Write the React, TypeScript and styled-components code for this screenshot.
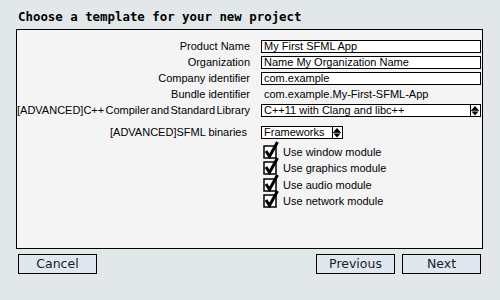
import React from "react";
import styled, { createGlobalStyle } from "styled-components";

const Global = createGlobalStyle`
  html, body { margin: 0; padding: 0; background: #e2e8ea; }
  #root { width: 500px; height: 300px; }
`;

const Page = styled.div`
  width: 500px;
  height: 300px;
  box-sizing: border-box;
  padding: 9px 17px 0 16px;
  display: flex;
  flex-direction: column;
  background: #e2e8ea;
`;

const Title = styled.h1`
  margin: 0 0 0 2px;
  height: 20px;
  font-family: "DejaVu Sans Mono", monospace;
  font-weight: bold;
  font-size: 12.4px;
  line-height: 16px;
  color: #000;
`;

const Panel = styled.div`
  height: 220px;
  box-sizing: border-box;
  border: 1px solid #000;
  background: #f4f4f4;
  padding: 10px 0 0 0;
  font-family: "Liberation Sans", Arial, sans-serif;
  font-size: 11px;
  color: #000;
`;

const Form = styled.div`
  display: grid;
  grid-template-columns: 233px 220px;
  column-gap: 11px;
  row-gap: 3px;
  align-items: center;
`;

const Label = styled.div<{ $squeeze?: boolean }>`
  text-align: right;
  white-space: nowrap;
  line-height: 13px;
  word-spacing: ${(p) => (p.$squeeze ? "-1.75px" : "0")};
`;

const Field = styled.div`
  height: 13px;
  box-sizing: border-box;
  border: 1px solid #000;
  background: #fff;
  padding: 0 2px;
  line-height: 11px;
  font-size: 11px;
  white-space: nowrap;
  overflow: hidden;
`;

const Plain = styled.div`
  height: 13px;
  line-height: 13px;
  padding-left: 3px;
  white-space: nowrap;
`;

const Select = styled.div<{ $width?: number }>`
  height: 13px;
  width: ${(p) => (p.$width ? `${p.$width}px` : "auto")};
  box-sizing: border-box;
  border: 1px solid #000;
  background: #fff;
  display: flex;
  align-items: stretch;
  line-height: 11px;
  font-size: 11px;
`;

const SelectText = styled.span`
  flex: 1;
  padding-left: 2px;
  white-space: nowrap;
  overflow: hidden;
`;

const Stepper = styled.span`
  width: 9px;
  border-left: 1px solid #000;
  display: flex;
`;

const Spacer = styled.div<{ $h: number }>`
  grid-column: 1 / span 2;
  height: ${(p) => p.$h}px;
`;

const Checks = styled.div`
  grid-column: 2;
  display: flex;
  flex-direction: column;
  margin-top: 0px;
`;

const CheckRow = styled.div`
  height: 16.6px;
  display: flex;
  align-items: flex-end;
  padding-left: 2px;
`;

const CheckText = styled.span`
  margin-left: 4px;
  line-height: 13px;
  padding-bottom: 0px;
  white-space: nowrap;
`;

const Footer = styled.div`
  display: flex;
  align-items: center;
  margin-top: 5px;
  padding: 0 2px 0 2px;
`;

const Button = styled.button`
  width: 79px;
  height: 20px;
  box-sizing: border-box;
  border: 1px solid #000;
  background: #e1e7ef;
  font-family: "DejaVu Sans", Verdana, sans-serif;
  font-size: 12.5px;
  color: #1a1a2a;
  padding: 0;
  line-height: 18px;
`;

const Grow = styled.div`
  flex: 1;
`;

const Gap = styled.div`
  width: 7px;
`;

const StepIcon = () => (
  <svg width="8" height="11" viewBox="0 0 8 11">
    <polygon points="4,1 7.5,5 0.5,5" fill="#000" />
    <rect x="0" y="5.2" width="8" height="0.8" fill="#000" />
    <polygon points="0.5,6.5 7.5,6.5 4,10.5" fill="#000" />
  </svg>
);

const CheckIcon = () => (
  <svg width="16" height="18" viewBox="0 0 16 18">
    <rect x="1" y="5" width="12" height="12" fill="#fff" stroke="#000" strokeWidth="1.5" />
    <path d="M3 10 L6.5 15.5 L14.5 1" fill="none" stroke="#000" strokeWidth="3" strokeLinejoin="miter" />
  </svg>
);

const modules = ["window", "graphics", "audio", "network"];

export default function App() {
  return (
    <>
      <Global />
      <Page>
        <Title>Choose a template for your new project</Title>
        <Panel>
          <Form>
            <Label>Product Name</Label>
            <Field>My First SFML App</Field>
            <Label>Organization</Label>
            <Field>Name My Organization Name</Field>
            <Label>Company identifier</Label>
            <Field>com.example</Field>
            <Label>Bundle identifier</Label>
            <Plain>com.example.My-First-SFML-App</Plain>
            <Label $squeeze>[ADVANCED]C++ Compiler and Standard Library</Label>
            <Select>
              <SelectText>C++11 with Clang and libc++</SelectText>
              <Stepper>
                <StepIcon />
              </Stepper>
            </Select>
            <Spacer $h={3} />
            <Label>[ADVANCED]SFML binaries&nbsp;</Label>
            <Select $width={82}>
              <SelectText>Frameworks</SelectText>
              <Stepper>
                <StepIcon />
              </Stepper>
            </Select>
            <Checks>
              {modules.map((m) => (
                <CheckRow key={m}>
                  <CheckIcon />
                  <CheckText>Use {m} module</CheckText>
                </CheckRow>
              ))}
            </Checks>
          </Form>
        </Panel>
        <Footer>
          <Button>Cancel</Button>
          <Grow />
          <Button>Previous</Button>
          <Gap />
          <Button>Next</Button>
        </Footer>
      </Page>
    </>
  );
}
